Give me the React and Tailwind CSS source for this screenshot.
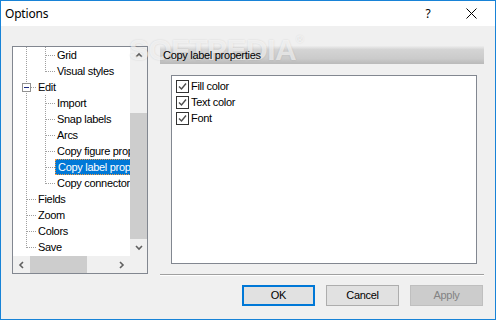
import React from "react";

const rows = [
  { t: "Grid", l: 2 },
  { t: "Visual styles", l: 2 },
  { t: "Edit", l: 1 },
  { t: "Import", l: 2 },
  { t: "Snap labels", l: 2 },
  { t: "Arcs", l: 2 },
  { t: "Copy figure properties", l: 2 },
  { t: "Copy label properties", l: 2, sel: true },
  { t: "Copy connector properties", l: 2 },
  { t: "Fields", l: 1 },
  { t: "Zoom", l: 1 },
  { t: "Colors", l: 1 },
  { t: "Save", l: 1 },
];

function TreeLines() {
  const dot = { stroke: "#a0a0a0", strokeWidth: 1, strokeDasharray: "1 1", shapeRendering: "crispEdges" };
  const h2 = [0, 1, 3, 4, 5, 6, 7, 8].map((i) => 8 + 16 * i);
  const h1 = [9, 10, 11, 12].map((i) => 8 + 16 * i);
  return (
    <svg className="absolute left-0 top-0" width="117" height="209" viewBox="0 0 117 209">
      <line x1="13.5" y1="0" x2="13.5" y2="201" {...dot} />
      <line x1="32.5" y1="0" x2="32.5" y2="25" {...dot} />
      <line x1="32.5" y1="48" x2="32.5" y2="137" {...dot} />
      {h2.map((y) => (
        <line key={"a" + y} x1="33" y1={y + 0.5} x2="42" y2={y + 0.5} {...dot} />
      ))}
      {h1.map((y) => (
        <line key={"b" + y} x1="14" y1={y + 0.5} x2="23" y2={y + 0.5} {...dot} />
      ))}
      <line x1="18" y1="40.5" x2="23" y2="40.5" {...dot} />
      <rect x="9.5" y="36.5" width="8" height="8" fill="#ffffff" stroke="#919191" shapeRendering="crispEdges" />
      <line x1="11" y1="40.5" x2="16" y2="40.5" stroke="#1c2a80" shapeRendering="crispEdges" />
    </svg>
  );
}

function Chevron({ dir }) {
  const paths = {
    up: "M1 5 L4 2 L7 5",
    down: "M1 2 L4 5 L7 2",
    left: "M5 1 L2 4 L5 7",
    right: "M2 1 L5 4 L2 7",
  };
  return (
    <svg width="8" height="8" viewBox="0 0 8 8">
      <path d={paths[dir]} fill="none" stroke="#606060" strokeWidth="1.6" />
    </svg>
  );
}

function Check() {
  return (
    <div className="w-[13px] h-[13px] border border-[#333333] bg-white flex items-center justify-center shrink-0">
      <svg width="11" height="11" viewBox="0 0 11 11">
        <path d="M2 5.5 L4.5 8 L9 2.5" fill="none" stroke="#4d4d4d" strokeWidth="1.4" />
      </svg>
    </div>
  );
}

export default function App() {
  return (
    <div className="relative w-[496px] h-[320px] border border-[#1883d7] bg-[#f0f0f0] flex flex-col overflow-hidden font-['Liberation_Sans',Arial,sans-serif] text-[11px] tracking-[-0.3px] text-black">
      {/* Title bar */}
      <div className="h-[25px] bg-white flex items-center shrink-0">
        <span className="pl-[4px] font-['Noto_Sans',sans-serif] text-[12px] tracking-[-0.2px]">Options</span>
        <div className="flex-1" />
        <span className="w-[12px] text-center font-['Noto_Sans',sans-serif] text-[12px] mr-[32px]">?</span>
        <svg width="11" height="11" viewBox="0 0 11 11" className="mr-[18px]">
          <path d="M0.5 0.5 L10.5 10.5 M10.5 0.5 L0.5 10.5" stroke="#000" strokeWidth="1" />
        </svg>
      </div>

      {/* Body */}
      <div className="flex flex-row pl-[11px] pt-[20px]">
        {/* Tree panel */}
        <div className="w-[136px] h-[228px] border border-[#828790] bg-white flex flex-col shrink-0">
          <div className="flex flex-row h-[209px]">
            <div className="relative w-[117px] h-[209px] overflow-hidden">
              <TreeLines />
              <div className="relative flex flex-col">
                {rows.map((r, i) => (
                  <div key={i} className={"h-[16px] flex items-center " + (r.l === 1 ? "pl-[23px]" : "pl-[42px]")}>
                    <span
                      className={
                        "h-[16px] flex items-center whitespace-nowrap px-[2px] " +
                        (r.sel ? "bg-[#0078d7] text-white border border-dotted border-[#f59a3f] px-[1px]" : "")
                      }
                    >
                      {r.t}
                    </span>
                  </div>
                ))}
              </div>
            </div>
            {/* vertical scrollbar */}
            <div className="w-[17px] h-[209px] bg-[#f0f0f0] flex flex-col">
              <div className="h-[17px] flex items-center justify-center">
                <Chevron dir="up" />
              </div>
              <div className="flex-1 flex flex-col justify-end">
                <div className="h-[126px] bg-[#cdcdcd]" />
              </div>
              <div className="h-[17px] flex items-center justify-center">
                <Chevron dir="down" />
              </div>
            </div>
          </div>
          {/* horizontal scrollbar */}
          <div className="h-[17px] flex flex-row bg-[#f0f0f0]">
            <div className="w-[17px] flex items-center justify-center">
              <Chevron dir="left" />
            </div>
            <div className="flex-1 flex flex-row items-stretch">
              <div className="w-[57px] bg-[#cdcdcd]" />
            </div>
            <div className="w-[17px] flex items-center justify-center">
              <Chevron dir="right" />
            </div>
            <div className="w-[17px]" />
          </div>
        </div>

        {/* Right column */}
        <div className="ml-[12px] w-[324px] flex flex-col">
          <div className="h-[18px] bg-[linear-gradient(to_bottom,#ededed_0%,#d4d4d4_20%,#cbcbcb_70%,#b9b9b9_100%)] flex items-center pl-[3px]">
            <span className="relative z-[2]">Copy label properties</span>
          </div>
          <div className="ml-[11px] mt-[11px] w-[306px] h-[189px] border border-[#828790] bg-white flex flex-col pt-[2px] pl-[4px]">
            {["Fill color", "Text color", "Font"].map((t) => (
              <div key={t} className="h-[16px] flex items-center gap-[2px]">
                <Check />
                <span>{t}</span>
              </div>
            ))}
          </div>
          <div className="mt-[10px] h-[2px] border-t border-[#a0a0a0] border-b border-b-white" />
          <div className="mt-[9px] flex flex-row justify-end gap-[11px] pr-[1px]">
            <div className="w-[73px] h-[21px] bg-[#e1e1e1] border-2 border-[#0078d7] flex items-center justify-center">OK</div>
            <div className="w-[73px] h-[21px] bg-[#e1e1e1] border border-[#adadad] flex items-center justify-center">Cancel</div>
            <div className="w-[73px] h-[21px] bg-[#cccccc] border border-[#bfbfbf] text-[#838383] flex items-center justify-center">Apply</div>
          </div>
        </div>
      </div>

      {/* Watermark overlay */}
      <div className="absolute z-[1] left-[128px] top-[34px] text-[30px] font-bold tracking-[-0.5px] text-[rgba(255,255,255,0.6)] [text-shadow:0_0_2px_rgba(0,0,0,0.12)] pointer-events-none leading-none">
        SOFTPEDIA<span className="text-[10px] align-top">®</span>
      </div>
    </div>
  );
}
